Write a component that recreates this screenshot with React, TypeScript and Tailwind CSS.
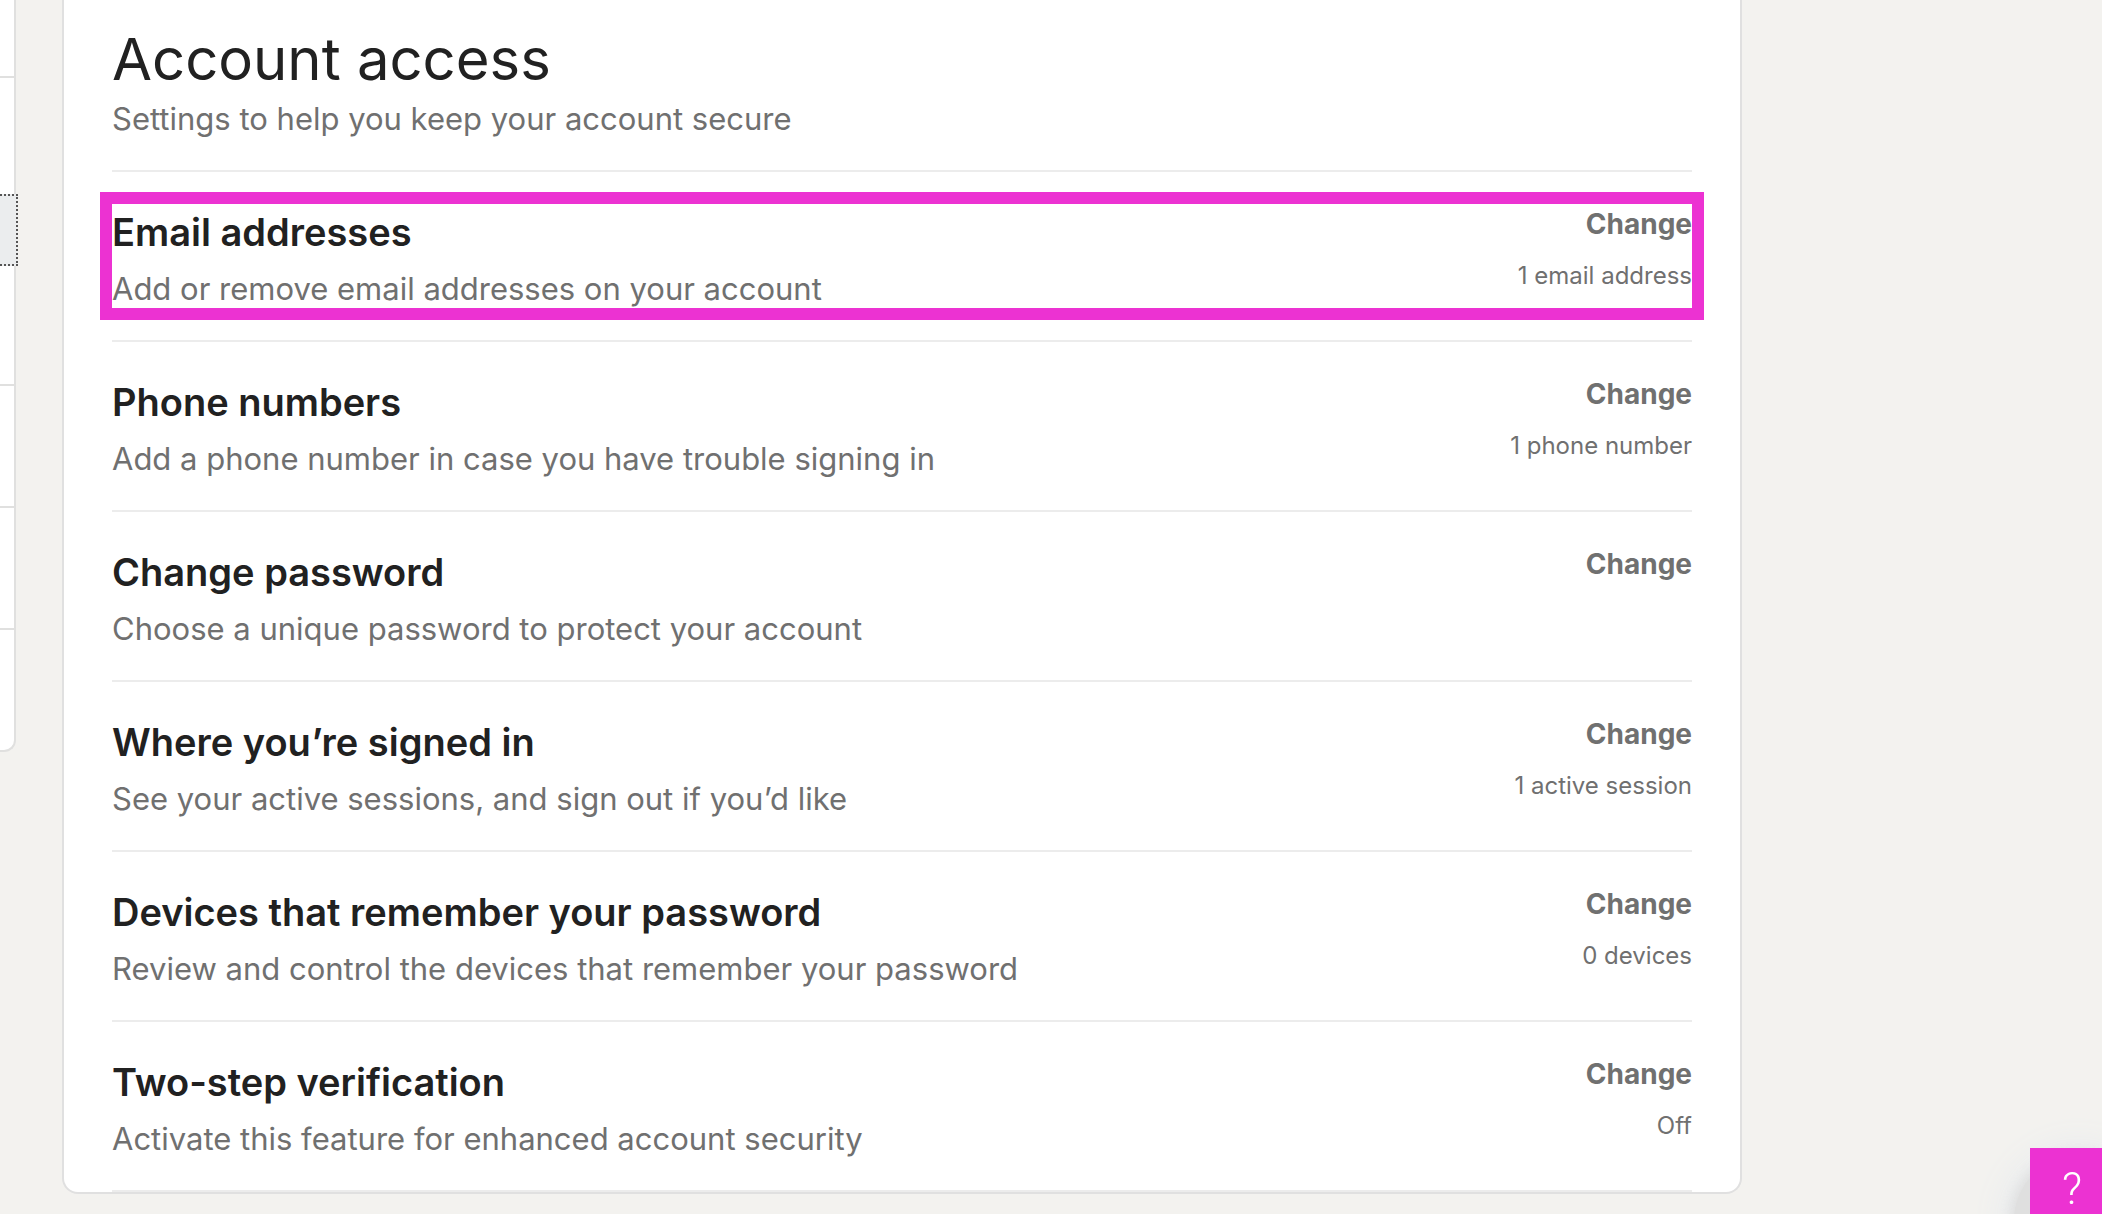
const settings = [
  {
    title: 'Email addresses',
    description: 'Add or remove email addresses on your account',
    status: '1 email address',
    highlighted: true,
  },
  {
    title: 'Phone numbers',
    description: 'Add a phone number in case you have trouble signing in',
    status: '1 phone number',
  },
  {
    title: 'Change password',
    description: 'Choose a unique password to protect your account',
    status: '',
  },
  {
    title: 'Where you’re signed in',
    description: 'See your active sessions, and sign out if you’d like',
    status: '1 active session',
  },
  {
    title: 'Devices that remember your password',
    description: 'Review and control the devices that remember your password',
    status: '0 devices',
  },
  {
    title: 'Two-step verification',
    description: 'Activate this feature for enhanced account security',
    status: 'Off',
  },
];

function SideNav() {
  return (
    <aside className="w-4 shrink-0 self-start rounded-br-xl border-r-2 border-b-2 border-[#e0e0df] bg-white">
      <div className="h-[78px] border-b-2 border-[#e0e0df]" />
      <div className="h-[308px] border-b-2 border-[#e0e0df] pt-[116px]">
        {/* selected section, with its focus ring */}
        <div className="relative -mr-1 h-[72px] border-y-2 border-r-2 border-dotted border-[#555555] bg-[#ebedee]" />
      </div>
      <div className="h-[122px] border-b-2 border-[#e0e0df]" />
      <div className="h-[122px] border-b-2 border-[#e0e0df]" />
      <div className="h-[120px]" />
    </aside>
  );
}

function SettingRow({ setting }: { setting: (typeof settings)[number] }) {
  return (
    <li className="relative flex h-[170px] justify-between border-b-2 border-[#ececec] pt-9">
      {setting.highlighted && (
        <div className="pointer-events-none absolute -inset-x-3 top-5 h-32 border-12 border-[#ec32d2]" />
      )}
      <div>
        <h2 className="text-[38px] leading-[48px] font-semibold text-[#212121]">
          {setting.title}
        </h2>
        <p className="mt-[9px] text-[31px] leading-[48px] text-[#707070]">{setting.description}</p>
      </div>
      <div className="flex flex-col items-end">
        <button type="button" className="text-[28px] leading-[32px] font-bold text-[#707070]">
          Change
        </button>
        <span className="mt-5 text-[24px] leading-[32px] text-[#707070]">{setting.status}</span>
      </div>
    </li>
  );
}

export default function App() {
  return (
    <div className="flex min-h-screen overflow-hidden bg-[#f3f2ef] pb-5 font-['Inter','Liberation_Sans',sans-serif]">
      <SideNav />
      <main className="mr-[360px] ml-[46px] min-w-0 flex-1 self-start rounded-b-2xl border-x-2 border-b-2 border-[#e0e0e0] bg-white px-12">
        <header className="h-[172px] border-b-2 border-[#ececec] pt-6">
          <h1 className="text-[58px] leading-[71px] text-[#212121]">Account access</h1>
          <p className="text-[31px] leading-[48px] text-[#707070]">
            Settings to help you keep your account secure
          </p>
        </header>
        <ul>
          {settings.map((setting) => (
            <SettingRow key={setting.title} setting={setting} />
          ))}
        </ul>
      </main>

      <div className="fixed right-0 bottom-0 h-[66px] w-[72px]">
        <div className="absolute top-2 -left-4 size-32 rounded-full bg-[#dfdfdf] shadow-[0_0_12px_4px_#dfdfdf,0_0_32px_12px_#e8ebee]" />
        <button
          type="button"
          aria-label="Help"
          className="relative flex size-full items-center justify-center bg-[#ec32d2] pt-4 pl-3 font-['Roboto',sans-serif] text-[44px] leading-none font-light text-white"
        >
          ?
        </button>
      </div>
    </div>
  );
}
